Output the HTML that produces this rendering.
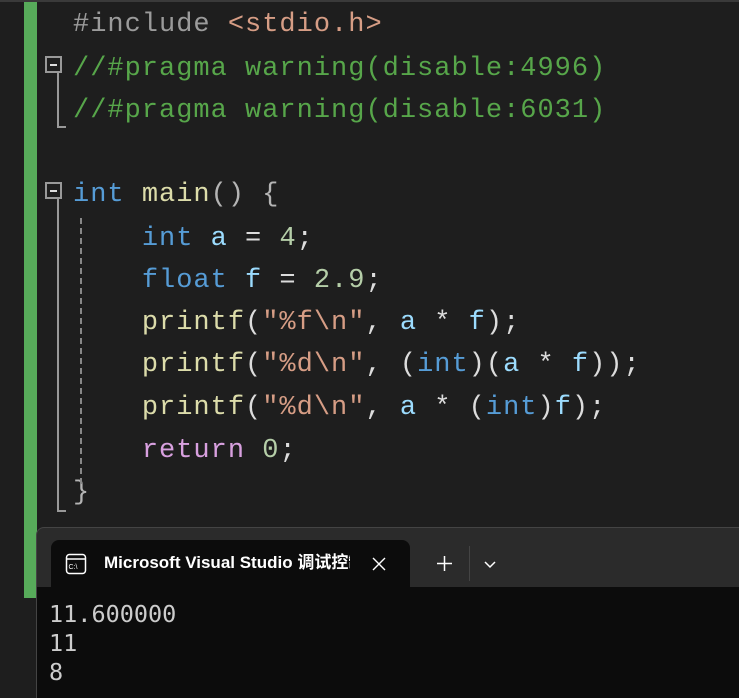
<!DOCTYPE html><html><head><meta charset="utf-8"><style>
html,body{margin:0;width:739px;height:698px;overflow:hidden}
body{background:#1e1e1e;position:relative;font-family:"Liberation Mono",monospace}
.top{position:absolute;left:0;top:0;width:739px;height:2px;background:#3a3a3a}
.bar{position:absolute;left:24px;top:2px;width:13px;height:596px;background:#57ab5a}
.l{position:absolute;left:73px;font-size:27px;letter-spacing:1.0px;white-space:pre;line-height:42px;height:42px;color:#dcdcdc}
.c{color:#57a64a}.k{color:#569cd6}.f{color:#dcdcaa}.v{color:#9cdcfe}.n{color:#b5cea8}.s{color:#d69d85}.r{color:#d8a0df}.g{color:#9b9b9b}.p{color:#b4b4b4}
.box{position:absolute;width:17px;height:17px;border:2px solid #999;box-sizing:border-box}
.box:after{content:"";position:absolute;left:3px;top:6px;width:7px;height:2px;background:#ddd}
.vl{position:absolute;background:#999;width:2px}
.hl{position:absolute;background:#999;height:2px}
.win{position:absolute;left:36px;top:527px;width:710px;height:171px;background:#2b2b2b;border-radius:8px 0 0 0;border-left:1px solid #444;border-top:1px solid #444}
.tab{position:absolute;left:51px;top:540px;width:359px;height:48px;background:#0c0c0c;border-radius:8px 8px 0 0}
.term{position:absolute;left:37px;top:587px;width:702px;height:111px;background:#0c0c0c}
.out{position:absolute;left:49px;font-size:23.5px;color:#cccccc;line-height:29px;font-family:"DejaVu Sans Mono",monospace}
</style></head><body>
<div class="top"></div><div class="bar"></div>
<div class="l" style="top:4px"><span class="g">#include</span> <span class="s">&lt;stdio.h&gt;</span></div>
<div class="l c" style="top:48px">//#pragma warning(disable:4996)</div>
<div class="l c" style="top:90px">//#pragma warning(disable:6031)</div>
<div class="l" style="top:174px"><span class="k">int</span> <span class="f">main</span><span class="p">() {</span></div>
<div class="l" style="top:218px">    <span class="k">int</span> <span class="v">a</span> = <span class="n">4</span>;</div>
<div class="l" style="top:260px">    <span class="k">float</span> <span class="v">f</span> = <span class="n">2.9</span>;</div>
<div class="l" style="top:302px">    <span class="f">printf</span>(<span class="s">"%f\n"</span>, <span class="v">a</span> * <span class="v">f</span>);</div>
<div class="l" style="top:344px">    <span class="f">printf</span>(<span class="s">"%d\n"</span>, (<span class="k">int</span>)(<span class="v">a</span> * <span class="v">f</span>));</div>
<div class="l" style="top:387px">    <span class="f">printf</span>(<span class="s">"%d\n"</span>, <span class="v">a</span> * (<span class="k">int</span>)<span class="v">f</span>);</div>
<div class="l" style="top:430px">    <span class="r">return</span> <span class="n">0</span>;</div>
<div class="l p" style="top:472px">}</div>
<div class="box" style="left:45px;top:56px"></div>
<div class="vl" style="left:57px;top:73px;height:55px"></div><div class="hl" style="left:57px;top:126px;width:9px"></div>
<div class="box" style="left:45px;top:182px"></div>
<div class="vl" style="left:57px;top:199px;height:313px"></div><div class="hl" style="left:57px;top:510px;width:9px"></div>
<div class="vl" style="left:80px;top:218px;height:270px;background:repeating-linear-gradient(#888 0 6px,transparent 6px 10px)"></div>
<div class="win"></div><div class="tab"></div><div class="term"></div>
<svg style="position:absolute;left:65px;top:553px" width="22" height="22" viewBox="0 0 22 22"><rect x="1.5" y="1.5" width="19" height="19" rx="3" fill="none" stroke="#fff" stroke-width="1.5"/><line x1="1.5" y1="6" x2="20.5" y2="6" stroke="#fff" stroke-width="1.5"/><text x="3.5" y="16" font-size="7" fill="#fff" font-family="Liberation Sans">C:\</text></svg>
<div style="position:absolute;left:104px;top:553px;font-family:'Liberation Sans','Noto Sans CJK SC',sans-serif;font-size:17px;line-height:20px;color:#fff;font-weight:bold;width:246px;overflow:hidden;white-space:nowrap">Microsoft Visual Studio 调试控制台</div>
<svg style="position:absolute;left:372px;top:557px" width="14" height="14"><path d="M1 1 L13 13 M13 1 L1 13" stroke="#fff" stroke-width="1.4"/></svg>
<svg style="position:absolute;left:436px;top:555px" width="17" height="17"><path d="M8.5 1 V16 M1 8.5 H16" stroke="#fff" stroke-width="1.5"/></svg>
<div style="position:absolute;left:469px;top:546px;width:1px;height:35px;background:#444"></div>
<svg style="position:absolute;left:483px;top:559px" width="14" height="10"><path d="M2 3 L7 8 L12 3" fill="none" stroke="#fff" stroke-width="1.5"/></svg>
<div class="out" style="top:600px">11.600000<br>11<br>8</div>
</body></html>
